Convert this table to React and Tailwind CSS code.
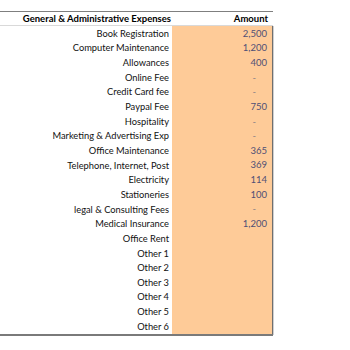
export default function App() {
  const rows = [
    ["Book Registration", "2,500"],
    ["Computer Maintenance", "1,200"],
    ["Allowances", "400"],
    ["Online Fee", "-"],
    ["Credit Card fee", "-"],
    ["Paypal Fee", "750"],
    ["Hospitality", "-"],
    ["Marketing & Advertising Exp", "-"],
    ["Office Maintenance", "365"],
    ["Telephone, Internet, Post", "369"],
    ["Electricity", "114"],
    ["Stationeries", "100"],
    ["legal & Consulting Fees", "-"],
    ["Medical Insurance", "1,200"],
    ["Office Rent", ""],
    ["Other 1", ""],
    ["Other 2", ""],
    ["Other 3", ""],
    ["Other 4", ""],
    ["Other 5", ""],
    ["Other 6", ""],
  ];
  return (
    <div className="w-[350px] h-[350px] bg-white pt-[11px]" style={{ fontFamily: "Lato, 'Liberation Sans', sans-serif" }}>
      <div className="w-[274px] flex">
        <div className="w-[273px]">
          <div className="border-t border-[#7f7f7f] flex h-[15px] items-center text-[9.5px] font-bold text-black border-b border-b-[#d9d9d9]">
            <div className="w-[172px] text-right pr-[1px] leading-none whitespace-nowrap">General &amp; Administrative Expenses</div>
            <div className="w-[100px] text-right pr-[4px] leading-none whitespace-nowrap">Amount</div>
          </div>
          <div className="flex border-b-2 border-[#7a7a7a]">
            <div className="w-[172px]">
              {rows.map(([l]) => (
                <div key={l} className="h-[14.67px] flex items-center justify-end pr-[3px] text-[9.3px] text-[#111] leading-none whitespace-nowrap">{l}</div>
              ))}
            </div>
            <div className="w-[101px] bg-[#fecb98] border-r border-[#6f6f6f]">
              {rows.map(([l, v]) => (
                <div key={l} className={`h-[14.67px] flex items-center justify-end text-[9.5px] leading-none ${v === "-" ? "pr-[16px] text-[#8a7f86]" : "pr-[5px] text-[#4f4f75]"}`}>{v}</div>
              ))}
            </div>
          </div>
        </div>
        <div className="w-[1px] mt-[15px] h-[309px] bg-[#d0d0d0]" />
      </div>
    </div>
  );
}
